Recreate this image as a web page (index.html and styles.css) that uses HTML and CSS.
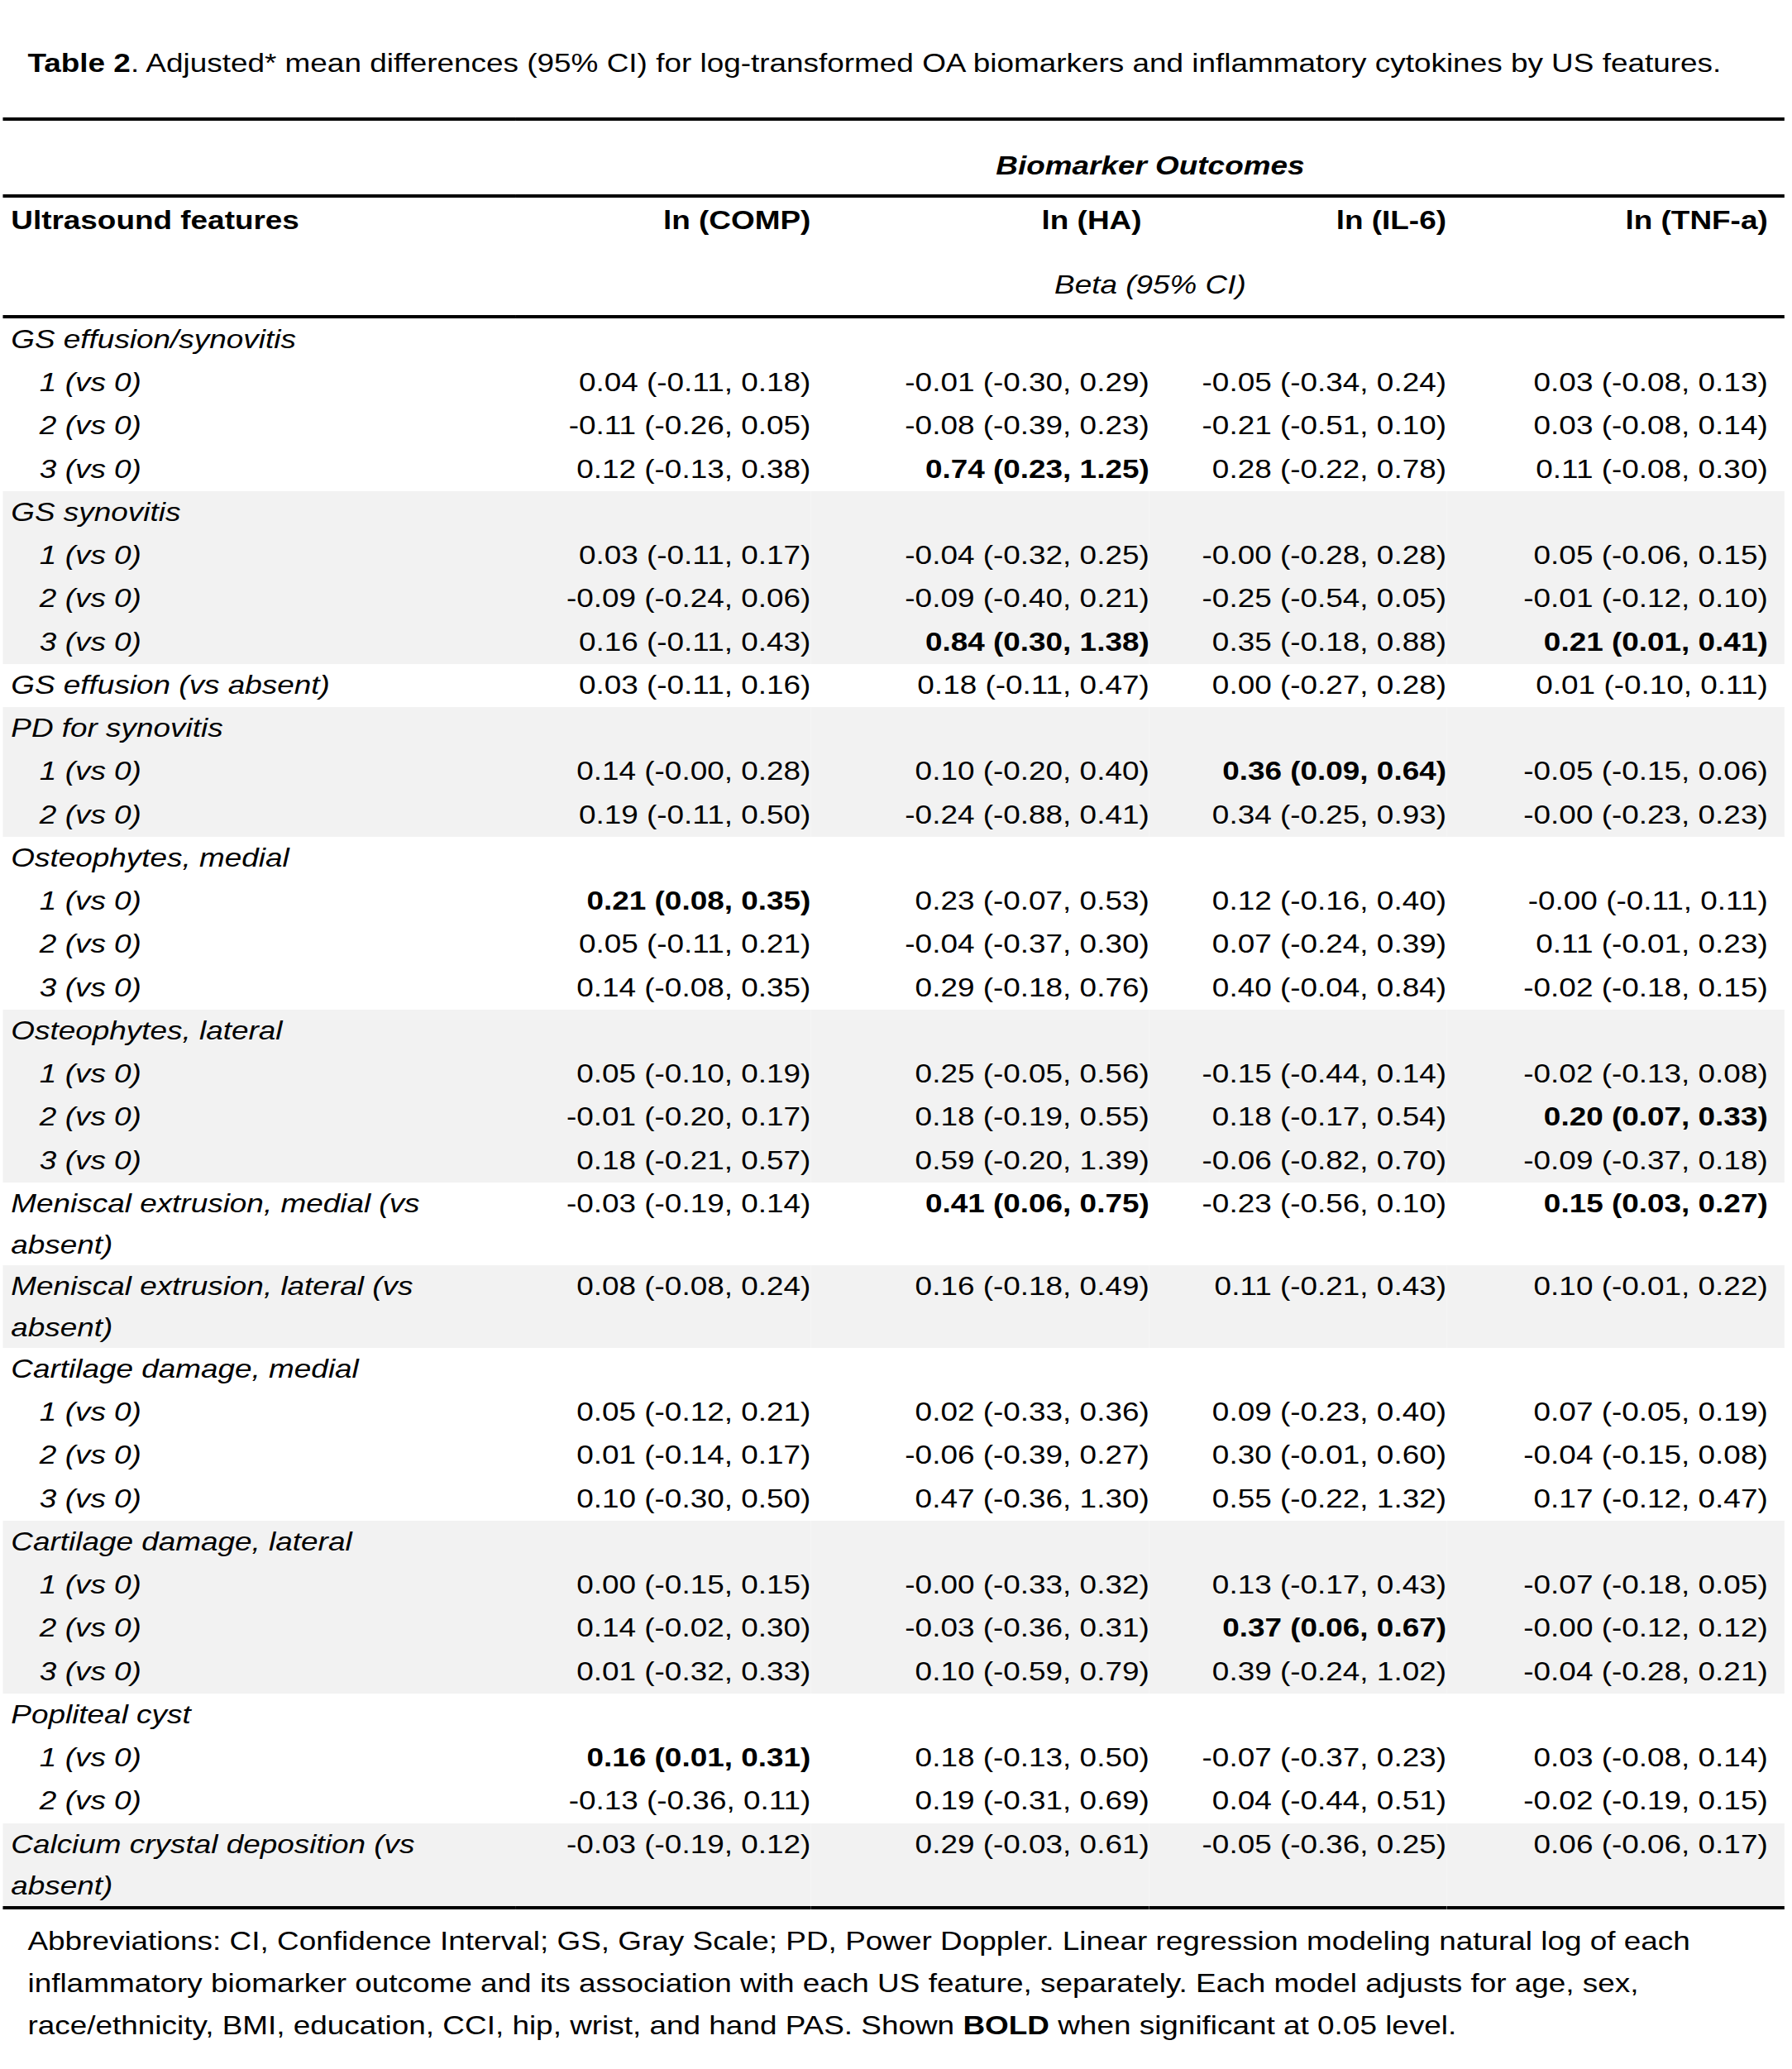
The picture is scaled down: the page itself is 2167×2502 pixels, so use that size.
FILE: index.html
```html
<!DOCTYPE html>
<html lang="en">
<head>
<meta charset="utf-8">
<title>Table 2</title>
<link rel="stylesheet" href="styles.css">
</head>
<body>
<div class="page">
  <p class="caption"><b>Table 2</b>. Adjusted* mean differences (95% CI) for log-transformed OA biomarkers and inflammatory cytokines by US features.</p>
  <table class="results">
    <colgroup>
      <col class="c-label">
      <col class="c-comp">
      <col class="c-ha">
      <col class="c-il6">
      <col class="c-tnf">
    </colgroup>
    <thead>
      <tr class="h-group">
        <th></th>
        <th colspan="4" class="group-title">Biomarker Outcomes</th>
      </tr>
      <tr class="h-cols">
        <th rowspan="2" class="h-label">Ultrasound features</th>
        <th class="num">ln (COMP)</th>
        <th class="num ha-head">ln (HA)</th>
        <th class="num">ln (IL-6)</th>
        <th class="num last">ln (TNF-a)</th>
      </tr>
      <tr class="h-stat">
        <th colspan="4" class="stat">Beta (95% CI)</th>
      </tr>
    </thead>
    <tbody>
      <tr><td class="label">GS effusion/synovitis</td><td></td><td></td><td></td><td></td></tr>
      <tr><td class="label sub">1 (vs 0)</td><td class="num">0.04 (-0.11, 0.18)</td><td class="num">-0.01 (-0.30, 0.29)</td><td class="num">-0.05 (-0.34, 0.24)</td><td class="num last">0.03 (-0.08, 0.13)</td></tr>
      <tr><td class="label sub">2 (vs 0)</td><td class="num">-0.11 (-0.26, 0.05)</td><td class="num">-0.08 (-0.39, 0.23)</td><td class="num">-0.21 (-0.51, 0.10)</td><td class="num last">0.03 (-0.08, 0.14)</td></tr>
      <tr><td class="label sub">3 (vs 0)</td><td class="num">0.12 (-0.13, 0.38)</td><td class="num sig">0.74 (0.23, 1.25)</td><td class="num">0.28 (-0.22, 0.78)</td><td class="num last">0.11 (-0.08, 0.30)</td></tr>

      <tr class="shade"><td class="label">GS synovitis</td><td></td><td></td><td></td><td></td></tr>
      <tr class="shade"><td class="label sub">1 (vs 0)</td><td class="num">0.03 (-0.11, 0.17)</td><td class="num">-0.04 (-0.32, 0.25)</td><td class="num">-0.00 (-0.28, 0.28)</td><td class="num last">0.05 (-0.06, 0.15)</td></tr>
      <tr class="shade"><td class="label sub">2 (vs 0)</td><td class="num">-0.09 (-0.24, 0.06)</td><td class="num">-0.09 (-0.40, 0.21)</td><td class="num">-0.25 (-0.54, 0.05)</td><td class="num last">-0.01 (-0.12, 0.10)</td></tr>
      <tr class="shade"><td class="label sub">3 (vs 0)</td><td class="num">0.16 (-0.11, 0.43)</td><td class="num sig">0.84 (0.30, 1.38)</td><td class="num">0.35 (-0.18, 0.88)</td><td class="num last sig">0.21 (0.01, 0.41)</td></tr>

      <tr><td class="label">GS effusion (vs absent)</td><td class="num">0.03 (-0.11, 0.16)</td><td class="num">0.18 (-0.11, 0.47)</td><td class="num">0.00 (-0.27, 0.28)</td><td class="num last">0.01 (-0.10, 0.11)</td></tr>

      <tr class="shade"><td class="label">PD for synovitis</td><td></td><td></td><td></td><td></td></tr>
      <tr class="shade"><td class="label sub">1 (vs 0)</td><td class="num">0.14 (-0.00, 0.28)</td><td class="num">0.10 (-0.20, 0.40)</td><td class="num sig">0.36 (0.09, 0.64)</td><td class="num last">-0.05 (-0.15, 0.06)</td></tr>
      <tr class="shade"><td class="label sub">2 (vs 0)</td><td class="num">0.19 (-0.11, 0.50)</td><td class="num">-0.24 (-0.88, 0.41)</td><td class="num">0.34 (-0.25, 0.93)</td><td class="num last">-0.00 (-0.23, 0.23)</td></tr>

      <tr><td class="label">Osteophytes, medial</td><td></td><td></td><td></td><td></td></tr>
      <tr><td class="label sub">1 (vs 0)</td><td class="num sig">0.21 (0.08, 0.35)</td><td class="num">0.23 (-0.07, 0.53)</td><td class="num">0.12 (-0.16, 0.40)</td><td class="num last">-0.00 (-0.11, 0.11)</td></tr>
      <tr><td class="label sub">2 (vs 0)</td><td class="num">0.05 (-0.11, 0.21)</td><td class="num">-0.04 (-0.37, 0.30)</td><td class="num">0.07 (-0.24, 0.39)</td><td class="num last">0.11 (-0.01, 0.23)</td></tr>
      <tr><td class="label sub">3 (vs 0)</td><td class="num">0.14 (-0.08, 0.35)</td><td class="num">0.29 (-0.18, 0.76)</td><td class="num">0.40 (-0.04, 0.84)</td><td class="num last">-0.02 (-0.18, 0.15)</td></tr>

      <tr class="shade"><td class="label">Osteophytes, lateral</td><td></td><td></td><td></td><td></td></tr>
      <tr class="shade"><td class="label sub">1 (vs 0)</td><td class="num">0.05 (-0.10, 0.19)</td><td class="num">0.25 (-0.05, 0.56)</td><td class="num">-0.15 (-0.44, 0.14)</td><td class="num last">-0.02 (-0.13, 0.08)</td></tr>
      <tr class="shade"><td class="label sub">2 (vs 0)</td><td class="num">-0.01 (-0.20, 0.17)</td><td class="num">0.18 (-0.19, 0.55)</td><td class="num">0.18 (-0.17, 0.54)</td><td class="num last sig">0.20 (0.07, 0.33)</td></tr>
      <tr class="shade"><td class="label sub">3 (vs 0)</td><td class="num">0.18 (-0.21, 0.57)</td><td class="num">0.59 (-0.20, 1.39)</td><td class="num">-0.06 (-0.82, 0.70)</td><td class="num last">-0.09 (-0.37, 0.18)</td></tr>

      <tr><td class="label">Meniscal extrusion, medial (vs absent)</td><td class="num">-0.03 (-0.19, 0.14)</td><td class="num sig">0.41 (0.06, 0.75)</td><td class="num">-0.23 (-0.56, 0.10)</td><td class="num last sig">0.15 (0.03, 0.27)</td></tr>

      <tr class="shade"><td class="label">Meniscal extrusion, lateral (vs absent)</td><td class="num">0.08 (-0.08, 0.24)</td><td class="num">0.16 (-0.18, 0.49)</td><td class="num">0.11 (-0.21, 0.43)</td><td class="num last">0.10 (-0.01, 0.22)</td></tr>

      <tr><td class="label">Cartilage damage, medial</td><td></td><td></td><td></td><td></td></tr>
      <tr><td class="label sub">1 (vs 0)</td><td class="num">0.05 (-0.12, 0.21)</td><td class="num">0.02 (-0.33, 0.36)</td><td class="num">0.09 (-0.23, 0.40)</td><td class="num last">0.07 (-0.05, 0.19)</td></tr>
      <tr><td class="label sub">2 (vs 0)</td><td class="num">0.01 (-0.14, 0.17)</td><td class="num">-0.06 (-0.39, 0.27)</td><td class="num">0.30 (-0.01, 0.60)</td><td class="num last">-0.04 (-0.15, 0.08)</td></tr>
      <tr><td class="label sub">3 (vs 0)</td><td class="num">0.10 (-0.30, 0.50)</td><td class="num">0.47 (-0.36, 1.30)</td><td class="num">0.55 (-0.22, 1.32)</td><td class="num last">0.17 (-0.12, 0.47)</td></tr>

      <tr class="shade"><td class="label">Cartilage damage, lateral</td><td></td><td></td><td></td><td></td></tr>
      <tr class="shade"><td class="label sub">1 (vs 0)</td><td class="num">0.00 (-0.15, 0.15)</td><td class="num">-0.00 (-0.33, 0.32)</td><td class="num">0.13 (-0.17, 0.43)</td><td class="num last">-0.07 (-0.18, 0.05)</td></tr>
      <tr class="shade"><td class="label sub">2 (vs 0)</td><td class="num">0.14 (-0.02, 0.30)</td><td class="num">-0.03 (-0.36, 0.31)</td><td class="num sig">0.37 (0.06, 0.67)</td><td class="num last">-0.00 (-0.12, 0.12)</td></tr>
      <tr class="shade"><td class="label sub">3 (vs 0)</td><td class="num">0.01 (-0.32, 0.33)</td><td class="num">0.10 (-0.59, 0.79)</td><td class="num">0.39 (-0.24, 1.02)</td><td class="num last">-0.04 (-0.28, 0.21)</td></tr>

      <tr><td class="label">Popliteal cyst</td><td></td><td></td><td></td><td></td></tr>
      <tr><td class="label sub">1 (vs 0)</td><td class="num sig">0.16 (0.01, 0.31)</td><td class="num">0.18 (-0.13, 0.50)</td><td class="num">-0.07 (-0.37, 0.23)</td><td class="num last">0.03 (-0.08, 0.14)</td></tr>
      <tr><td class="label sub">2 (vs 0)</td><td class="num">-0.13 (-0.36, 0.11)</td><td class="num">0.19 (-0.31, 0.69)</td><td class="num">0.04 (-0.44, 0.51)</td><td class="num last">-0.02 (-0.19, 0.15)</td></tr>

      <tr class="shade end"><td class="label">Calcium crystal deposition (vs absent)</td><td class="num">-0.03 (-0.19, 0.12)</td><td class="num">0.29 (-0.03, 0.61)</td><td class="num">-0.05 (-0.36, 0.25)</td><td class="num last">0.06 (-0.06, 0.17)</td></tr>
    </tbody>
  </table>
  <p class="note">Abbreviations: CI, Confidence Interval; GS, Gray Scale; PD, Power Doppler. Linear regression modeling natural log of each<br>inflammatory biomarker outcome and its association with each US feature, separately. Each model adjusts for age, sex,<br><span>race/ethnicity, BMI, education, CCI, hip, wrist, and hand PAS. Shown <b>BOLD</b> when significant at 0.05 level.</span></p>
</div>
</body>
</html>
```

FILE: styles.css
```css
html, body {
  margin: 0;
  padding: 0;
  background: #ffffff;
}

body {
  color: #000000;
  font-family: "Liberation Sans", Arial, Helvetica, sans-serif;
  font-size: 32px;
}

/* The source document is rendered slightly wider than tall; the page is
   laid out normally and then widened as a whole. */
.page {
  width: 1879px;
  padding-top: 56px;
  transform: scaleX(1.1533);
  transform-origin: 0 0;
}

.caption {
  margin: 0 0 46px;
  padding-left: 29px;
  line-height: 40px;
  white-space: nowrap;
}

.results {
  margin-left: 2.5px;
  width: 1868.5px;
  table-layout: fixed;
  border-collapse: separate;
  border-spacing: 0;
}

.c-label { width: 538.5px; }
.c-comp  { width: 309px; }
.c-ha    { width: 355px; }
.c-il6   { width: 311.5px; }
.c-tnf   { width: 354.5px; }

.results th,
.results td {
  padding: 0;
  line-height: 50px;
  vertical-align: top;
  font-weight: normal;
  text-align: left;
}

/* header rows */
.h-group th {
  border-top: 4px solid #000;
  border-bottom: 4px solid #000;
  padding: 28.6px 0 10.4px;
}

.results .group-title {
  font-weight: bold;
  font-style: italic;
  text-align: center;
}

.h-cols th {
  padding: 2px 0 26px;
  font-weight: bold;
}

.h-cols .h-label {
  padding: 2px 0 0 9px;
  text-align: left;
  border-bottom: 4px solid #000;
}

.h-stat th {
  padding: 2px 0 12px;
  border-bottom: 4px solid #000;
}

.results .stat {
  font-style: italic;
  text-align: center;
}

.results th.num,
.results td.num {
  text-align: right;
  white-space: nowrap;
}

.results .last {
  padding-right: 17.5px;
}

.results .ha-head {
  padding-right: 8px;
}

/* body rows */
.results tbody td {
  height: 52.25px;
}

.results td.label {
  font-style: italic;
  padding-left: 9px;
  padding-right: 12px;
}

.results td.sub {
  padding-left: 39px;
}

.results td.sig {
  font-weight: bold;
}

.shade td {
  background: #f2f2f2;
}

.end td {
  border-bottom: 4px solid #000;
}

.note {
  margin: 13px 0 0;
  padding: 0 29px;
  line-height: 51px;
  white-space: nowrap;
}
```
